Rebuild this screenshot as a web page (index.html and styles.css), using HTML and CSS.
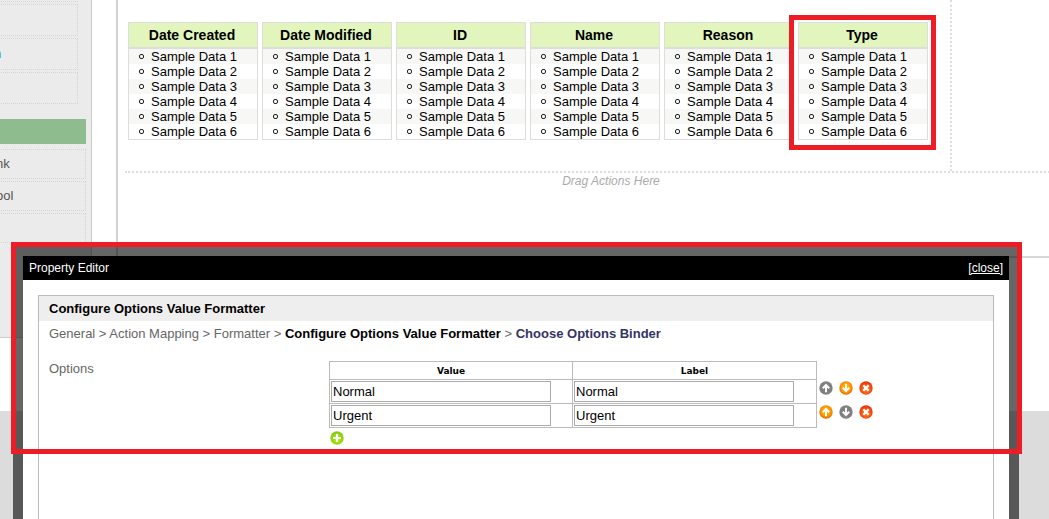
FILE: index.html
```html
<!DOCTYPE html>
<html lang="en">
<head>
<meta charset="utf-8">
<title>Property Editor</title>
<link rel="stylesheet" href="styles.css">
</head>
<body>
<svg class="defs" aria-hidden="true">
  <defs>
    <radialGradient id="orange" cx="50%" cy="45%" r="60%"><stop offset="0" stop-color="#ffc400"/><stop offset=".6" stop-color="#fb9a00"/><stop offset="1" stop-color="#e2560c"/></radialGradient>
    <radialGradient id="red" cx="50%" cy="60%" r="60%"><stop offset="0" stop-color="#ff8a1c"/><stop offset="1" stop-color="#f02808"/></radialGradient>
    <radialGradient id="green" cx="50%" cy="60%" r="60%"><stop offset="0" stop-color="#b9ee00"/><stop offset="1" stop-color="#82c818"/></radialGradient>
    <path id="arrow" d="M7 2.6 L10.9 6.6 L9.7 7.9 L8 6.5 V11.2 H6 V6.5 L4.3 7.9 L3.1 6.6 Z" fill="#fff"/>
  </defs>
</svg>
<div class="page">
  <div class="workspace">
    <aside class="sidebar">
      <ul class="palette palette-narrow">
        <li></li><li></li><li class="linked"><a href="#">n</a></li><li></li>
      </ul>
      <div class="palette-title"></div>
      <ul class="palette">
        <li>nk</li><li>ool</li><li></li>
      </ul>
    </aside>
    <main class="canvas">
      <div class="columns-area">
        <div class="columns">
          <section class="column"><h2>Date Created</h2><ul><li>Sample Data 1</li><li>Sample Data 2</li><li>Sample Data 3</li><li>Sample Data 4</li><li>Sample Data 5</li><li>Sample Data 6</li></ul></section>
          <section class="column"><h2>Date Modified</h2><ul><li>Sample Data 1</li><li>Sample Data 2</li><li>Sample Data 3</li><li>Sample Data 4</li><li>Sample Data 5</li><li>Sample Data 6</li></ul></section>
          <section class="column"><h2>ID</h2><ul><li>Sample Data 1</li><li>Sample Data 2</li><li>Sample Data 3</li><li>Sample Data 4</li><li>Sample Data 5</li><li>Sample Data 6</li></ul></section>
          <section class="column"><h2>Name</h2><ul><li>Sample Data 1</li><li>Sample Data 2</li><li>Sample Data 3</li><li>Sample Data 4</li><li>Sample Data 5</li><li>Sample Data 6</li></ul></section>
          <section class="column"><h2>Reason</h2><ul><li>Sample Data 1</li><li>Sample Data 2</li><li>Sample Data 3</li><li>Sample Data 4</li><li>Sample Data 5</li><li>Sample Data 6</li></ul></section>
          <section class="column marked"><h2>Type</h2><ul><li>Sample Data 1</li><li>Sample Data 2</li><li>Sample Data 3</li><li>Sample Data 4</li><li>Sample Data 5</li><li>Sample Data 6</li></ul></section>
        </div>
      </div>
      <p class="actions">Drag Actions Here</p>
    </main>
  </div>
</div>

<div class="modal" role="dialog" aria-labelledby="dialog-title">
  <header class="titlebar"><span id="dialog-title">Property Editor</span><a href="#">[close]</a></header>
  <div class="modal-body">
    <form class="panel">
      <h1>Configure Options Value Formatter</h1>
      <nav class="crumbs">General &gt; Action Mapping &gt; Formatter &gt; <b>Configure Options Value Formatter</b> &gt; <a href="#">Choose Options Binder</a></nav>
      <div class="field">
        <div class="field-label">Options</div>
        <div class="grid-wrap">
          <div class="grid-row">
            <table class="grid">
              <thead><tr><th>Value</th><th>Label</th></tr></thead>
              <tbody>
                <tr><td><input type="text" value="Normal" aria-label="Value 1"></td><td><input type="text" value="Normal" aria-label="Label 1"></td></tr>
                <tr><td><input type="text" value="Urgent" aria-label="Value 2"></td><td><input type="text" value="Urgent" aria-label="Label 2"></td></tr>
              </tbody>
            </table>
            <div class="row-tools">
              <div class="tools">
                <button type="button" aria-label="Move up" disabled><svg viewBox="0 0 14 14"><circle cx="7" cy="7" r="6.7" fill="#808080"/><use href="#arrow"/></svg></button>
                <button type="button" aria-label="Move down"><svg viewBox="0 0 14 14"><circle cx="7" cy="7" r="6.7" fill="url(#orange)"/><use href="#arrow" transform="rotate(180 7 7)"/></svg></button>
                <button type="button" aria-label="Delete"><svg viewBox="0 0 14 14"><circle cx="7" cy="7" r="6.7" fill="url(#red)"/><path d="M4.3 4.3 9.7 9.7M9.7 4.3 4.3 9.7" stroke="#fff" stroke-width="2.3"/></svg></button>
              </div>
              <div class="tools">
                <button type="button" aria-label="Move up"><svg viewBox="0 0 14 14"><circle cx="7" cy="7" r="6.7" fill="url(#orange)"/><use href="#arrow"/></svg></button>
                <button type="button" aria-label="Move down" disabled><svg viewBox="0 0 14 14"><circle cx="7" cy="7" r="6.7" fill="#808080"/><use href="#arrow" transform="rotate(180 7 7)"/></svg></button>
                <button type="button" aria-label="Delete"><svg viewBox="0 0 14 14"><circle cx="7" cy="7" r="6.7" fill="url(#red)"/><path d="M4.3 4.3 9.7 9.7M9.7 4.3 4.3 9.7" stroke="#fff" stroke-width="2.3"/></svg></button>
              </div>
            </div>
          </div>
          <button type="button" class="add" aria-label="Add row"><svg viewBox="0 0 14 14"><circle cx="7" cy="7" r="6.7" fill="url(#green)"/><path d="M7 3V11M3 7H11" stroke="#fff" stroke-width="2.2"/></svg></button>
        </div>
      </div>
    </form>
  </div>
</div>
<div class="highlight"></div>
</body>
</html>
```

FILE: styles.css
```css
* { box-sizing: border-box; }
html { height: 100%; }
body {
  position: relative;
  height: 100%;
  margin: 0;
  overflow: hidden;
  background: #dcdcdc;
  font-family: "Liberation Sans", Arial, sans-serif;
  font-size: 13px;
  color: #000;
}
ul, h1, h2, p { margin: 0; padding: 0; }
.defs { position: absolute; width: 0; height: 0; }

.page { background: #fff; padding-bottom: 73px; }
.workspace { display: flex; align-items: flex-start; gap: 24px; }

.sidebar {
  flex: 0 0 92px;
  height: 338px;
  overflow: hidden;
  background: #ebebeb;
  border-right: 1px solid #ccc;
  border-bottom: 1px solid #ccc;
}
.palette {
  display: grid;
  gap: 2px;
  margin: 0 5px 0 -4px;
  list-style: none;
  color: #555;
}
.palette li {
  height: 30px;
  line-height: 27px;
  border: 1px dotted #d4d4d4;
  border-left: 0;
}
.palette-narrow { margin: -30px 13px 0 -6px; }
.palette-narrow li { height: 32px; line-height: 30px; }
.palette a { color: #2a8ae6; text-decoration: none; }
.palette-title {
  height: 25px;
  margin: 15px 5px 5px 0;
  background: #8fbc8f;
}

.canvas {
  flex: 1;
  min-width: 0;
  height: 258px;
  padding-left: 7px;
  overflow: hidden;
  border-left: 2px solid #d2d2d2;
  border-bottom: 2px solid #d6d6d6;
}
.columns-area {
  margin-right: -48px;
  border-bottom: 2px dotted #ddd;
}
.columns {
  display: flex;
  gap: 4px;
  width: 827px;
  padding: 22px 0 31px 3px;
  border-right: 2px dotted #ddd;
}
.column {
  position: relative;
  flex: 0 0 130px;
  border: 1px solid #ddd;
}
.column h2 {
  height: 26px;
  padding-right: 2px;
  line-height: 25px;
  border-bottom: 2px solid #ddd;
  background: #e2f5bd;
  font-size: 14px;
  text-align: center;
}
.column ul { list-style: none; }
.column li {
  display: flex;
  align-items: center;
  gap: 7px;
  padding-left: 10px;
  line-height: 15px;
}
.column li::before {
  content: "";
  box-sizing: border-box;
  width: 5px;
  height: 5px;
  border: 1px solid #222;
  border-radius: 2px;
}
.column li:nth-child(odd) { background: #f7f7f6; }
.marked::after {
  content: "";
  position: absolute;
  inset: -8px -9px -11px -10px;
  border: 5px solid #ee1c24;
}
.actions {
  margin-right: -48px;
  line-height: 16px;
  font-size: 12px;
  font-style: italic;
  text-align: center;
  color: #aaa;
}

.modal {
  position: absolute;
  top: 246px;
  left: 13px;
  right: 30px;
  bottom: 0;
  display: flex;
  flex-direction: column;
  padding: 10px 10px 0;
  background: rgba(0, 0, 0, .6);
}
.titlebar {
  display: flex;
  justify-content: space-between;
  padding: 0 6px;
  line-height: 24px;
  background: #000;
  color: #fff;
  font-size: 12px;
}
.titlebar a { color: #fff; }
.modal-body {
  flex: 1;
  display: flex;
  padding: 15px 15px 0;
  background: #fff;
}
.panel {
  flex: 1;
  border: 1px solid #bbb;
  border-bottom: 0;
  color: #666;
}
.panel h1 {
  padding-left: 10px;
  line-height: 25px;
  background: #eee;
  color: #000;
  font-size: 13px;
}
.crumbs { padding-left: 10px; line-height: 25px; }
.crumbs b { color: #000; }
.crumbs a { color: #333366; font-weight: bold; text-decoration: none; }
.field {
  display: flex;
  padding: 15px 0 0 10px;
}
.field-label { flex: 0 0 280px; line-height: 15px; }
.grid-row { display: flex; }
.grid {
  width: 488px;
  table-layout: fixed;
  border-collapse: collapse;
}
.grid th, .grid td { border: 1px solid #bbb; }
.grid th {
  height: 18px;
  padding: 2px 0 0;
  line-height: 15px;
  font-family: "DejaVu Sans", Verdana, sans-serif;
  font-size: 9px;
  color: #000;
}
.grid th:first-child { width: 243px; }
.grid td { height: 24px; padding: 1px; }
.grid input {
  display: block;
  width: 220px;
  height: 21px;
  padding: 1px;
  border: 1px solid #aaa;
  background: #fff;
  color: #000;
  font: 13px "Liberation Sans", Arial, sans-serif;
}
.row-tools {
  display: grid;
  align-content: start;
  gap: 10px;
  padding: 20px 0 0 2px;
}
.tools { display: flex; gap: 6px; }
.tools button, .add {
  width: 14px;
  height: 14px;
  padding: 0;
  border: 0;
  background: none;
}
.add { display: block; margin: 3px 0 0 1px; }
button svg { display: block; width: 14px; height: 14px; }

.highlight {
  position: absolute;
  top: 242px;
  left: 11px;
  right: 27px;
  height: 212px;
  border: 5px solid #ee1c24;
  pointer-events: none;
}
```
